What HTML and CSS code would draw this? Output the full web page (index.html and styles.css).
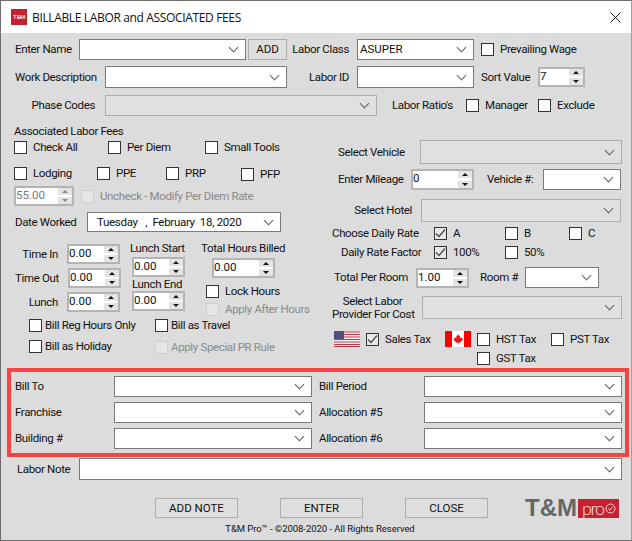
FILE: index.html
```html
<!DOCTYPE html>
<html lang="en">
<head>
  <meta charset="UTF-8" />
  <title>Billable Labor and Associated Fees</title>
  <link rel="stylesheet" href="styles.css">
</head>
<body>
  <div class="window">
    <div class="titlebar">
      <span class="app-logo">T&amp;M</span>
      <span class="title">BILLABLE LABOR and ASSOCIATED FEES</span>
      <svg class="close" width="11" height="11" viewBox="0 0 11 11"><path d="M.5.5l10 10M10.5.5l-10 10" stroke="#111" fill="none"/></svg>
    </div>

    <div class="form">
      <!-- Top rows -->
      <div class="row h21">
        <span class="lbl w65 in1">Enter Name</span>
        <div class="combo w167"></div>
        <div class="btn add">ADD</div>
        <span class="lbl w70 end">Labor Class</span>
        <div class="combo w117"><span>ASUPER</span></div>
        <label class="check ml7"><span class="box"></span>Prevailing Wage</label>
      </div>
      <div class="row h22 mt6">
        <span class="lbl w91 in1">Work Description</span>
        <div class="combo w182"></div>
        <span class="lbl w70 end">Labor ID</span>
        <div class="combo w117"></div>
        <span class="lbl w57 ml7">Sort Value</span>
        <div class="spin w47"><span class="val">7</span><span class="arrows"><i class="up"></i><i class="down"></i></span></div>
      </div>
      <div class="row h21 mt7">
        <span class="lbl w91 end pr10">Phase Codes</span>
        <div class="combo w272 off"></div>
        <span class="lbl w74 ml15">Labor Ratio's</span>
        <label class="check w72"><span class="box"></span>Manager</label>
        <label class="check"><span class="box"></span>Exclude</label>
      </div>

      <div class="mid">
        <!-- Left column -->
        <div class="left">
          <div class="heading">Associated Labor Fees</div>
          <div class="row mt3">
            <label class="check w94"><span class="box"></span>Check All</label>
            <label class="check w97"><span class="box"></span>Per Diem</label>
            <label class="check"><span class="box"></span>Small Tools</label>
          </div>
          <div class="row h13 mt13">
            <label class="check w83"><span class="box"></span>Lodging</label>
            <label class="check w69"><span class="box"></span>PPE</label>
            <label class="check w75"><span class="box"></span>PRP</label>
            <label class="check low"><span class="box"></span>PFP</label>
          </div>
          <div class="row mt6">
            <div class="spin w60 off"><span class="val">55.00</span><span class="arrows"><i class="up"></i><i class="down"></i></span></div>
            <label class="check ml7 off"><span class="box"></span>Uncheck - Modify Per Diem Rate</label>
          </div>
          <div class="row h20 mt6">
            <span class="lbl w73 in1">Date Worked</span>
            <div class="combo w194 date"><span>Tuesday &nbsp; , &nbsp;February &nbsp;18, 2020</span></div>
          </div>

          <div class="times">
            <div class="col-a">
              <div class="row"><span class="lbl w53 end pr9">Time In</span><div class="spin w53"><span class="val">0.00</span><span class="arrows"><i class="up"></i><i class="down"></i></span></div></div>
              <div class="row mt4"><span class="lbl w54 end pr9">Time Out</span><div class="spin w53"><span class="val">0.00</span><span class="arrows"><i class="up"></i><i class="down"></i></span></div></div>
              <div class="row mt4"><span class="lbl w53 end pr9">Lunch</span><div class="spin w53"><span class="val">0.00</span><span class="arrows"><i class="up"></i><i class="down"></i></span></div></div>
            </div>
            <div class="col-b">
              <div class="cap cap-start">Lunch Start</div>
              <div class="spin w53"><span class="val">0.00</span><span class="arrows"><i class="up"></i><i class="down"></i></span></div>
              <div class="cap cap-end">Lunch End</div>
              <div class="spin w53"><span class="val">0.00</span><span class="arrows"><i class="up"></i><i class="down"></i></span></div>
            </div>
            <div class="col-c">
              <div class="cap cap-start">Total Hours Billed</div>
              <div class="spin w63 total"><span class="val">0.00</span><span class="arrows"><i class="up"></i><i class="down"></i></span></div>
              <label class="check lock"><span class="box"></span>Lock Hours</label>
              <label class="check after off"><span class="box"></span>Apply After Hours</label>
            </div>
          </div>

          <div class="row mt3 ml15">
            <label class="check w126 tight"><span class="box"></span>Bill Reg Hours Only</label>
            <label class="check tight"><span class="box"></span>Bill as Travel</label>
          </div>
          <div class="row h13 mt8 ml15">
            <label class="check w126 tight"><span class="box"></span>Bill as Holiday</label>
            <label class="check off low tight"><span class="box"></span>Apply Special PR Rule</label>
          </div>
        </div>

        <!-- Right column -->
        <div class="right">
          <div class="row h24">
            <span class="lbl w88 in6">Select Vehicle</span>
            <div class="combo w202 off"></div>
          </div>
          <div class="row h21 mt5">
            <span class="lbl w79 in6">Enter Mileage</span>
            <div class="spin w63 tall"><span class="val">0</span><span class="arrows"><i class="up"></i><i class="down"></i></span></div>
            <span class="lbl w69 in13">Vehicle #:</span>
            <div class="combo w78"></div>
          </div>
          <div class="row h23 mt9">
            <span class="lbl w89 end pr9">Select Hotel</span>
            <div class="combo w200 off"></div>
          </div>
          <div class="row mt5">
            <span class="lbl w102">Choose Daily Rate</span>
            <label class="check w71"><span class="box on"><svg width="11" height="11" viewBox="0 0 11 11"><path d="M1 5.500l3 3 6-7" stroke="#444" stroke-width="1.300" fill="none"/></svg></span>A</label>
            <label class="check w64"><span class="box"></span>B</label>
            <label class="check"><span class="box"></span>C</label>
          </div>
          <div class="row mt6">
            <span class="lbl w102 in9">Daily Rate Factor</span>
            <label class="check w71"><span class="box on"><svg width="11" height="11" viewBox="0 0 11 11"><path d="M1 5.500l3 3 6-7" stroke="#444" stroke-width="1.300" fill="none"/></svg></span>100%</label>
            <label class="check"><span class="box"></span>50%</label>
          </div>
          <div class="row h21 mt8">
            <span class="lbl w84 in2">Total Per Room</span>
            <div class="spin w53"><span class="val">1.00</span><span class="arrows"><i class="up"></i><i class="down"></i></span></div>
            <span class="lbl w56 in11">Room #</span>
            <div class="combo w74"></div>
          </div>
          <div class="row h23 mt8">
            <span class="lbl w90 provider">Select Labor<br>Provider For Cost</span>
            <div class="combo w200 off"></div>
          </div>
          <div class="row h16 mt12 ml2">
            <svg class="flag" width="26" height="16" viewBox="0 0 26 16">
              <rect width="26" height="16" fill="#f4f0f0"/>
              <path d="M0 1h26M0 3.500h26M0 6h26M0 8.500h26M0 11h26M0 13.500h26M0 15.500h26" stroke="#c0394a" stroke-width="1.200"/>
              <rect width="10" height="8" fill="#50507e"/>
            </svg>
            <label class="check w79 ml6"><span class="box on"><svg width="11" height="11" viewBox="0 0 11 11"><path d="M1 5.500l3 3 6-7" stroke="#444" stroke-width="1.300" fill="none"/></svg></span>Sales Tax</label>
            <svg class="flag" width="26" height="16" viewBox="0 0 26 16">
              <rect width="26" height="16" fill="#fff"/>
              <rect width="7" height="16" fill="#f00"/>
              <rect x="19" width="7" height="16" fill="#f00"/>
              <path d="M13 3l1.200 2 1-.5-.4 2.500 1-.7.500 1 1.500-.2-.4 1.400.5.400-2.400 1.800.3 1-2.300-.3v1.600h-.6v-1.600l-2.300.3.300-1-2.400-1.800.5-.4-.4-1.400 1.500.2.500-1 1 .7-.4-2.500 1 .5z" fill="#e8151b"/>
            </svg>
            <label class="check w74 ml6"><span class="box"></span>HST Tax</label>
            <label class="check"><span class="box"></span>PST Tax</label>
          </div>
          <div class="row mt5 gst">
            <label class="check"><span class="box"></span>GST Tax</label>
          </div>
        </div>
      </div>

      <!-- Highlighted allocation block -->
      <div class="alloc">
        <div class="row h21">
          <span class="lbl w99">Bill To</span>
          <div class="combo w198"></div>
          <span class="lbl w105 ml7">Bill Period</span>
          <div class="combo w198"></div>
        </div>
        <div class="row h21 mt5">
          <span class="lbl w99">Franchise</span>
          <div class="combo w198"></div>
          <span class="lbl w105 ml7">Allocation #5</span>
          <div class="combo w198"></div>
        </div>
        <div class="row h21 mt5">
          <span class="lbl w99">Building #</span>
          <div class="combo w198"></div>
          <span class="lbl w105 ml7">Allocation #6</span>
          <div class="combo w198"></div>
        </div>
      </div>

      <div class="row h22 mt1">
        <span class="lbl w65 in3">Labor Note</span>
        <div class="combo w543"></div>
      </div>

      <div class="actions">
        <div class="btn action">ADD NOTE</div>
        <div class="btn action">ENTER</div>
        <div class="btn action">CLOSE</div>
        <div class="brand">
          <span class="brand-name">T&amp;M</span>
          <span class="brand-pro">pro<svg width="11" height="11" viewBox="0 0 11 11"><circle cx="5.500" cy="5.500" r="4.500" stroke="#f3d6d8" fill="none"/><path d="M3.200 5.500l1.800 1.800 2.500-3.500" stroke="#f3d6d8" fill="none"/></svg></span>
        </div>
      </div>

      <div class="copy">T&amp;M Pro&trade; - &copy;2008-2020 - All Rights Reserved</div>
    </div>
  </div>
</body>
</html>
```

FILE: styles.css
```css
* {
  box-sizing: border-box;
}

html, body {
  margin: 0;
  overflow: hidden;
}

body {
  font-family: Roboto, Arial, sans-serif;
  font-size: 11.5px;
  letter-spacing: -0.35px;
  line-height: 13px;
  color: #111;
}

.window {
  width: 632px;
  height: 541px;
  background: #dcdcdc;
  border: 1px solid #6e6e6e;
  border-right-color: #a0a0a0;
  overflow: hidden;
}

.titlebar {
  display: flex;
  align-items: center;
  height: 32px;
  padding: 0 10px;
  background: #fff;
}

.app-logo {
  width: 16px;
  height: 16px;
  background: #c5202f;
  color: #f6dada;
  font-size: 6px;
  font-weight: 700;
  letter-spacing: -0.3px;
  line-height: 16px;
  text-align: center;
}

.title {
  margin-left: 5px;
  font-family: "Open Sans", Arial, sans-serif;
  font-size: 12px;
  letter-spacing: -0.35px;
}

.close {
  margin-left: auto;
}

.form {
  padding: 6px 0 0 13px;
}

.row {
  display: flex;
  align-items: center;
}

.lbl {
  flex: none;
  white-space: nowrap;
}

.end {
  text-align: right;
  padding-right: 8px;
}

.pr9 { padding-right: 9px; }
.pr10 { padding-right: 10px; }
.in1 { padding-left: 1px; }
.in2 { padding-left: 2px; }
.in3 { padding-left: 3px; }
.in6 { padding-left: 6px; }
.in9 { padding-left: 9px; }
.in11 { padding-left: 11px; }
.in13 { padding-left: 13px; }

.h13 { height: 13px; }
.h16 { height: 16px; }
.h20 { height: 20px; }
.h21 { height: 21px; }
.h22 { height: 22px; }
.h23 { height: 23px; }
.h24 { height: 24px; }

.mt1 { margin-top: 1px; }
.mt3 { margin-top: 3px; }
.mt4 { margin-top: 4px; }
.mt5 { margin-top: 5px; }
.mt6 { margin-top: 6px; }
.mt7 { margin-top: 7px; }
.mt8 { margin-top: 8px; }
.mt9 { margin-top: 9px; }
.mt12 { margin-top: 12px; }
.mt13 { margin-top: 13px; }

.ml2 { margin-left: 2px; }
.ml6 { margin-left: 6px; }
.ml7 { margin-left: 7px; }
.ml15 { margin-left: 15px; }

.w47 { width: 47px; }
.w53 { width: 53px; }
.w54 { width: 54px; }
.w56 { width: 56px; }
.w57 { width: 57px; }
.w60 { width: 60px; }
.w63 { width: 63px; }
.w64 { width: 64px; }
.w65 { width: 65px; }
.w69 { width: 69px; }
.w70 { width: 70px; }
.w71 { width: 71px; }
.w72 { width: 72px; }
.w73 { width: 73px; }
.w74 { width: 74px; }
.w75 { width: 75px; }
.w78 { width: 78px; }
.w79 { width: 79px; }
.w83 { width: 83px; }
.w84 { width: 84px; }
.w88 { width: 88px; }
.w89 { width: 89px; }
.w90 { width: 90px; }
.w91 { width: 91px; }
.w94 { width: 94px; }
.w97 { width: 97px; }
.w99 { width: 99px; }
.w102 { width: 102px; }
.w105 { width: 105px; }
.w117 { width: 117px; }
.w126 { width: 126px; }
.w167 { width: 167px; }
.w182 { width: 182px; }
.w194 { width: 194px; }
.w198 { width: 198px; }
.w200 { width: 200px; }
.w202 { width: 202px; }
.w272 { width: 272px; }
.w543 { width: 543px; }

/* Combo box */
.combo {
  flex: none;
  display: flex;
  align-items: center;
  height: 100%;
  padding: 0 8px 0 2px;
  background: #fff;
  border: 1px solid #7a7a7a;
  letter-spacing: 0;
}

.combo::after {
  content: "";
  flex: none;
  width: 6px;
  height: 6px;
  margin: -4px 0 0 auto;
  border-right: 1px solid #606060;
  border-bottom: 1px solid #606060;
  transform: rotate(45deg);
}

.combo.off {
  background: #e0e0e0;
  border-color: #adadad;
}

.combo.date {
  padding-left: 9px;
  letter-spacing: -0.3px;
}

/* Spinner */
.spin {
  flex: none;
  display: flex;
  height: 20px;
  background: #fff;
  border: 2px solid #b4b4b4;
  letter-spacing: 0;
}

.spin.tall {
  height: 21px;
}

.spin.total {
  margin-left: 11px;
  margin-top: 1px;
}

.val {
  flex: 1;
  line-height: 14px;
}

.arrows {
  display: flex;
  flex-direction: column;
  justify-content: space-between;
  flex: none;
  width: 14px;
}

.arrows i {
  display: flex;
  align-items: center;
  justify-content: center;
  height: 7px;
  background: #e4e4e4;
}

.arrows i::before {
  content: "";
  border-left: 3px solid transparent;
  border-right: 3px solid transparent;
}

.up::before {
  border-bottom: 3px solid #111;
}

.down::before {
  border-top: 3px solid #111;
}

.spin.off {
  color: #777;
}

.spin.off .up::before {
  border-bottom-color: #8a8a8a;
}

.spin.off .down::before {
  border-top-color: #8a8a8a;
}

/* Check box */
.check {
  flex: none;
  display: flex;
  align-items: center;
  gap: 6px;
  height: 13px;
  white-space: nowrap;
}

.check.tight {
  gap: 3px;
}

.box {
  flex: none;
  display: flex;
  align-items: center;
  justify-content: center;
  width: 13px;
  height: 13px;
  background: #fff;
  border: 1px solid #333;
}

.box.on {
  background: #e8e8e8;
}

.check.off {
  color: #8a8a8a;
}

.check.off .box {
  background: #e6e6e6;
  border-color: #cfcfcf;
}

.low {
  margin-top: 2px;
}

/* Layout of the middle part */
.mid {
  display: flex;
  margin-top: 8px;
}

.left {
  flex: none;
  width: 318px;
}

.right {
  flex: none;
  width: 290px;
  padding-top: 16px;
}

.heading {
  height: 14px;
  line-height: 14px;
}

.times {
  display: flex;
  margin-top: 8px;
}

.col-a {
  padding-top: 4px;
  flex: none;
}

.col-b {
  flex: none;
  width: 53px;
  margin-left: 11px;
  padding-top: 1px;
}

.col-c {
  flex: none;
  margin-left: 16px;
  padding-top: 1px;
}

.cap {
  white-space: nowrap;
}

.cap-start {
  height: 16px;
  line-height: 15px;
}

.col-b .cap-start {
  margin-left: -2px;
}

.cap-end {
  height: 14px;
  line-height: 14px;
}

.lock {
  margin: 7px 0 0 5px;
}

.after {
  margin: 5px 0 0 5px;
}

.provider {
  padding-right: 9px;
  text-align: center;
}

.gst {
  margin-left: 145px;
}

/* Red highlighted block */
.alloc {
  width: 622px;
  height: 89px;
  margin: 3px 0 0 -7px;
  padding: 4px 0 0 4px;
  border: 4px solid #f74343;
}

/* Buttons and footer */
.btn {
  flex: none;
  display: flex;
  align-items: center;
  justify-content: center;
  background: #dedede;
  border: 1px solid #adadad;
  letter-spacing: 0;
}

.add {
  width: 39px;
  height: 100%;
  margin-left: 2px;
}

.actions {
  display: flex;
  align-items: center;
  height: 20px;
  margin: 18px 0 0 141px;
}

.action {
  width: 83px;
  height: 20px;
  margin-right: 42px;
}

.brand {
  display: flex;
  align-items: center;
  height: 20px;
  margin-left: -5px;
}

.brand-name {
  width: 53px;
  font-family: "Liberation Sans", Arial, sans-serif;
  font-size: 24px;
  font-weight: 700;
  letter-spacing: 0;
  color: #666;
  line-height: 20px;
}

.brand-pro {
  display: flex;
  align-items: center;
  gap: 1px;
  width: 41px;
  height: 19px;
  padding-left: 4px;
  background: #c5202f;
  color: #f8e4e5;
  font-family: Lato, Arial, sans-serif;
  font-size: 18px;
  font-weight: 300;
  letter-spacing: -1.4px;
  line-height: 17px;
}

.copy {
  width: 612px;
  margin-top: 5px;
  font-size: 9.5px;
  letter-spacing: -0.05px;
  line-height: 12px;
  text-align: center;
}
```
